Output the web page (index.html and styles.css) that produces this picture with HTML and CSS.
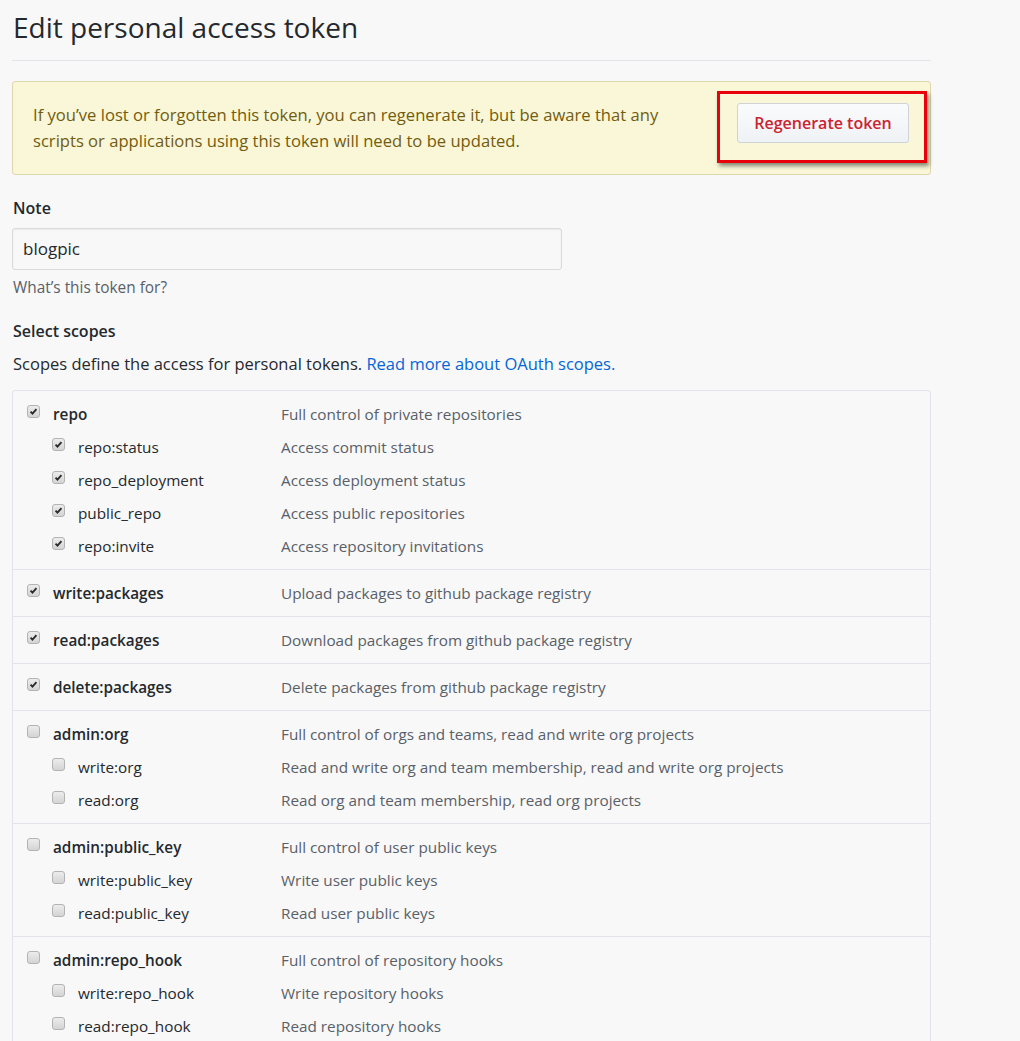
FILE: index.html
```html
<!DOCTYPE html>
<html lang="en">
<head>
<meta charset="utf-8">
<title>Edit personal access token</title>
<link rel="stylesheet" href="styles.css">
</head>
<body>
<div class="page">
  <div class="subhead">
    <h1 class="subhead-heading">Edit personal access token</h1>
  </div>

  <div class="flash">
    <p class="flash-text">If you’ve lost or forgotten this token, you can regenerate it, but be aware that any scripts or applications using this token will need to be updated.</p>
    <button class="btn-danger" type="button">Regenerate token</button>
    <div class="highlight"></div>
  </div>

  <div class="form-group">
    <label class="form-label">Note</label>
    <div class="input">blogpic</div>
    <p class="note">What’s this token for?</p>
  </div>

  <div class="form-group scopes-head">
    <div class="form-label">Select scopes</div>
    <p class="scopes-desc">Scopes define the access for personal tokens. <a class="link">Read more about OAuth scopes.</a></p>
  </div>

  <div class="scopes">
    <ul class="group">
      <li class="row top"><span class="cb on"><svg viewBox="0 0 13 13"><path d="M3 6.6 5.3 9 10 3.6" /></svg></span><span class="label">repo</span><span class="desc">Full control of private repositories</span></li>
      <li class="row sub"><span class="cb on"><svg viewBox="0 0 13 13"><path d="M3 6.6 5.3 9 10 3.6" /></svg></span><span class="label">repo:status</span><span class="desc">Access commit status</span></li>
      <li class="row sub"><span class="cb on"><svg viewBox="0 0 13 13"><path d="M3 6.6 5.3 9 10 3.6" /></svg></span><span class="label">repo_deployment</span><span class="desc">Access deployment status</span></li>
      <li class="row sub"><span class="cb on"><svg viewBox="0 0 13 13"><path d="M3 6.6 5.3 9 10 3.6" /></svg></span><span class="label">public_repo</span><span class="desc">Access public repositories</span></li>
      <li class="row sub"><span class="cb on"><svg viewBox="0 0 13 13"><path d="M3 6.6 5.3 9 10 3.6" /></svg></span><span class="label">repo:invite</span><span class="desc">Access repository invitations</span></li>
    </ul>
    <ul class="group">
      <li class="row top"><span class="cb on"><svg viewBox="0 0 13 13"><path d="M3 6.6 5.3 9 10 3.6" /></svg></span><span class="label">write:packages</span><span class="desc">Upload packages to github package registry</span></li>
    </ul>
    <ul class="group">
      <li class="row top"><span class="cb on"><svg viewBox="0 0 13 13"><path d="M3 6.6 5.3 9 10 3.6" /></svg></span><span class="label">read:packages</span><span class="desc">Download packages from github package registry</span></li>
    </ul>
    <ul class="group">
      <li class="row top"><span class="cb on"><svg viewBox="0 0 13 13"><path d="M3 6.6 5.3 9 10 3.6" /></svg></span><span class="label">delete:packages</span><span class="desc">Delete packages from github package registry</span></li>
    </ul>
    <ul class="group">
      <li class="row top"><span class="cb"></span><span class="label">admin:org</span><span class="desc">Full control of orgs and teams, read and write org projects</span></li>
      <li class="row sub"><span class="cb"></span><span class="label">write:org</span><span class="desc">Read and write org and team membership, read and write org projects</span></li>
      <li class="row sub"><span class="cb"></span><span class="label">read:org</span><span class="desc">Read org and team membership, read org projects</span></li>
    </ul>
    <ul class="group">
      <li class="row top"><span class="cb"></span><span class="label">admin:public_key</span><span class="desc">Full control of user public keys</span></li>
      <li class="row sub"><span class="cb"></span><span class="label">write:public_key</span><span class="desc">Write user public keys</span></li>
      <li class="row sub"><span class="cb"></span><span class="label">read:public_key</span><span class="desc">Read user public keys</span></li>
    </ul>
    <ul class="group">
      <li class="row top"><span class="cb"></span><span class="label">admin:repo_hook</span><span class="desc">Full control of repository hooks</span></li>
      <li class="row sub"><span class="cb"></span><span class="label">write:repo_hook</span><span class="desc">Write repository hooks</span></li>
      <li class="row sub"><span class="cb"></span><span class="label">read:repo_hook</span><span class="desc">Read repository hooks</span></li>
    </ul>
  </div>
</div>
</body>
</html>
```
FILE: styles.css
```css
* { box-sizing: border-box; }

html, body {
  margin: 0;
  background: #f8f8f8;
}

body {
  font-family: "Open Sans", "Noto Sans", "Liberation Sans", sans-serif;
  color: #24292e;
  font-size: 16px;
  line-height: 1.5;
}

.page {
  width: 919px;
  margin-left: 12px;
  padding-top: 10px;
  padding-bottom: 40px;
}

.subhead {
  border-bottom: 1px solid #e1e4e8;
  padding-bottom: 16px;
}

.subhead-heading {
  margin: 0;
  font-size: 28px;
  font-weight: 400;
  line-height: 34px;
  padding-left: 1px;
}

.flash {
  position: relative;
  margin-top: 20px;
  display: flex;
  align-items: flex-start;
  justify-content: space-between;
  padding: 20px 21px 20px 20px;
  background: #f9f7d7;
  border: 1px solid #dcd7ad;
  border-radius: 3px;
  color: #735c0f;
}

.flash-text {
  margin: 0;
  width: 660px;
  font-size: 16.6px;
  line-height: 26px;
}

.btn-danger {
  margin-top: 1px;
  height: 40px;
  width: 172px;
  padding: 0 16px;
  font-family: inherit;
  font-size: 16px;
  font-weight: 600;
  color: #cb2431;
  background: linear-gradient(#fafbfc, #eff2f5);
  border: 1px solid #cfd3d8;
  border-radius: 3px;
}

.highlight {
  position: absolute;
  left: 704px;
  top: 9px;
  width: 210px;
  height: 72px;
  border: 3px solid #e8000b;
  box-shadow: 2px 3px 4px rgba(0, 0, 0, 0.45);
  pointer-events: none;
}

.form-group {
  margin-top: 21px;
}

.form-label {
  display: block;
  font-weight: 600;
  font-size: 16px;
  line-height: 24px;
  padding-left: 1px;
}

.input {
  margin-top: 8px;
  width: 550px;
  height: 42px;
  padding: 0 10px;
  font-size: 17px;
  line-height: 40px;
  background: #f8f8f8;
  border: 1px solid #d8dadc;
  border-radius: 3px;
  box-shadow: inset 0 1px 2px rgba(27, 31, 35, 0.06);
}

.note {
  margin: 8px 0 0;
  font-size: 15.4px;
  line-height: 20px;
  color: #586069;
  padding-left: 1px;
}

.scopes-desc {
  margin: 9px 0 0;
  font-size: 16.5px;
  line-height: 24px;
  padding-left: 1px;
}

.link { color: #0366d6; }

.scopes {
  margin-top: 14px;
  border: 1px solid #e1e4e8;
  border-radius: 3px;
}

.group {
  list-style: none;
  margin: 0;
  padding: 7px 0 6px;
}

.group + .group {
  border-top: 1px solid #e1e4e8;
}

.row {
  display: grid;
  grid-template-columns: 13px 241px 1fr;
  align-items: center;
  height: 33px;
  padding-left: 14px;
  font-size: 15.3px;
}

.row.sub {
  grid-template-columns: 13px 216px 1fr;
  padding-left: 39px;
}

.label {
  padding-left: 13px;
  color: #24292e;
}

.row.top .label {
  font-weight: 600;
}

.desc {
  color: #586069;
}

.cb {
  display: block;
  width: 13px;
  height: 13px;
  margin-top: -7px;
  border: 1px solid #b3b3b3;
  border-radius: 3px;
  background: linear-gradient(#ececec, #d4d4d4);
}

.cb svg {
  display: block;
  width: 11px;
  height: 11px;
  fill: none;
  stroke: #2b2b2b;
  stroke-width: 2.2;
}
```
